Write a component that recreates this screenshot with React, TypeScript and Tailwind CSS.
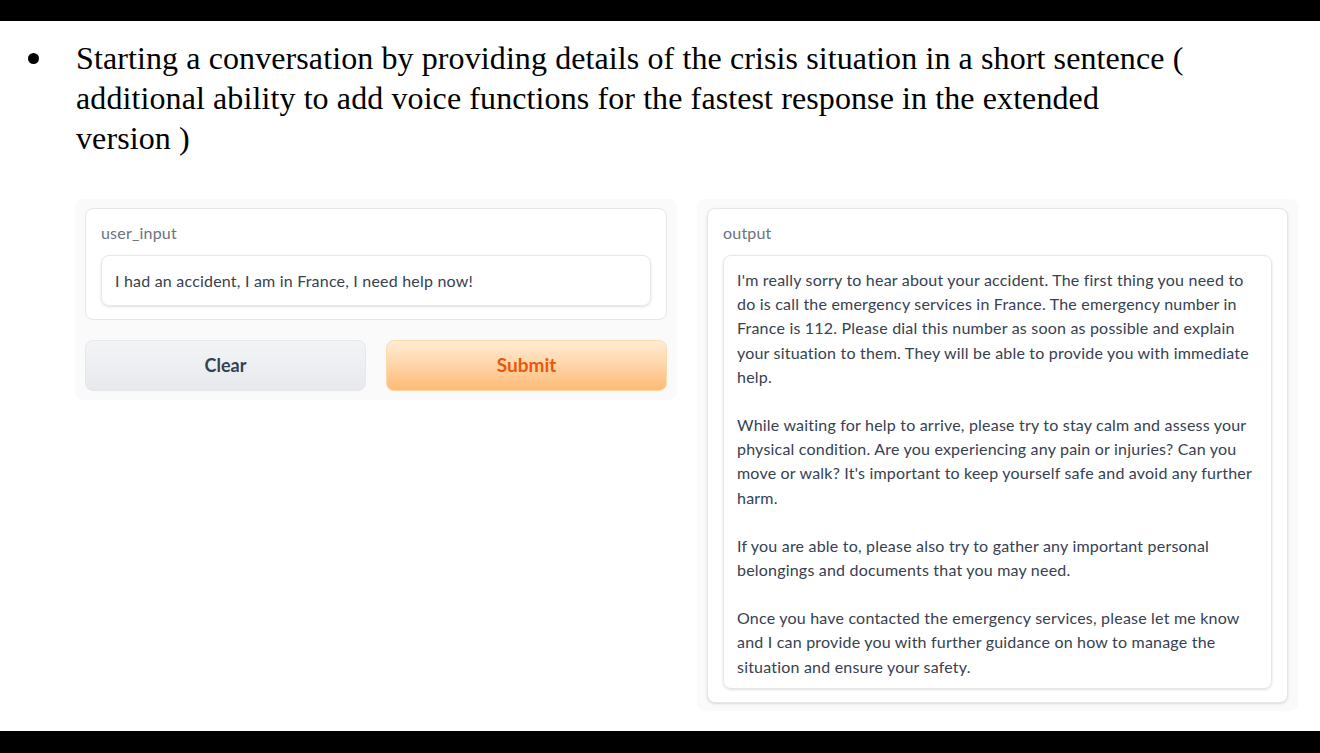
const output = [
  [
    "I'm really sorry to hear about your accident. The first thing you need to",
    "do is call the emergency services in France. The emergency number in",
    "France is 112. Please dial this number as soon as possible and explain",
    "your situation to them. They will be able to provide you with immediate",
    "help.",
  ],
  [
    "While waiting for help to arrive, please try to stay calm and assess your",
    "physical condition. Are you experiencing any pain or injuries? Can you",
    "move or walk? It's important to keep yourself safe and avoid any further",
    "harm.",
  ],
  [
    "If you are able to, please also try to gather any important personal",
    "belongings and documents that you may need.",
  ],
  [
    "Once you have contacted the emergency services, please let me know",
    "and I can provide you with further guidance on how to manage the",
    "situation and ensure your safety.",
  ],
];

export default function App() {
  return (
    <div className="flex h-[753px] w-[1320px] flex-col overflow-hidden bg-white">
      <div className="h-[21px] bg-black" />

      <div className="flex flex-1 flex-col">
        <div className="flex pt-[17px] font-['Liberation_Serif',serif] text-[32px] leading-[40px] text-black">
          <div className="flex h-[40px] w-[76px] items-center pl-[28px]">
            <span className="h-[11px] w-[11px] rounded-full bg-black" />
          </div>
          <p className="tracking-[0.1px]">
            Starting a conversation by providing details of the crisis situation in a short sentence (
            <br />
            additional ability to add voice functions for the fastest response in the extended
            <br />
            version )
          </p>
        </div>

        <div className="mt-[41px] flex items-start gap-[20px] pl-[75px] font-['Lato',sans-serif] tracking-[0.2px]">
          <div className="flex w-[602px] flex-col gap-[20px] rounded-lg bg-[#fafafa] px-[10px] pb-[9px] pt-[9px]">
            <div className="rounded-lg border border-[#e5e7eb] bg-white px-[15px] pb-[13px] pt-[13px]">
              <div className="text-[16px] leading-[22px] text-[#6b7280]">user_input</div>
              <div className="mt-[11px] flex h-[51px] items-center rounded-lg border border-[#e5e7eb] px-[13px] text-[16px] text-[#374151] shadow-sm">
                I had an accident, I am in France, I need help now!
              </div>
            </div>
            <div className="flex gap-[20px]">
              <button className="h-[51px] flex-1 rounded-lg border border-[#e5e7eb] bg-gradient-to-b from-[#f3f4f6] to-[#e7e9ed] text-[18px] font-bold tracking-normal text-[#374151]">
                Clear
              </button>
              <button className="h-[51px] flex-1 rounded-lg border border-[#fed7aa] bg-gradient-to-b from-[#ffedd5] to-[#fdba74] text-[19px] font-bold tracking-normal text-[#ea580c]">
                Submit
              </button>
            </div>
          </div>

          <div className="w-[601px] rounded-lg bg-[#fafafa] px-[10px] pb-[8px] pt-[9px]">
            <div className="rounded-lg border border-[#e5e7eb] bg-white px-[15px] pb-[13px] pt-[13px] shadow-sm">
              <div className="text-[16px] leading-[22px] text-[#6b7280]">output</div>
              <div className="mt-[11px] flex h-[434px] flex-col gap-[24px] rounded-lg border border-[#e5e7eb] px-[13px] pt-[12px] text-[16px] leading-[24.2px] text-[#374151] shadow-sm">
                {output.map((para, i) => (
                  <p key={i}>
                    {para.map((line) => (
                      <span key={line} className="block whitespace-nowrap">
                        {line}
                      </span>
                    ))}
                  </p>
                ))}
              </div>
            </div>
          </div>
        </div>
      </div>

      <div className="h-[22px] bg-black" />
    </div>
  );
}
